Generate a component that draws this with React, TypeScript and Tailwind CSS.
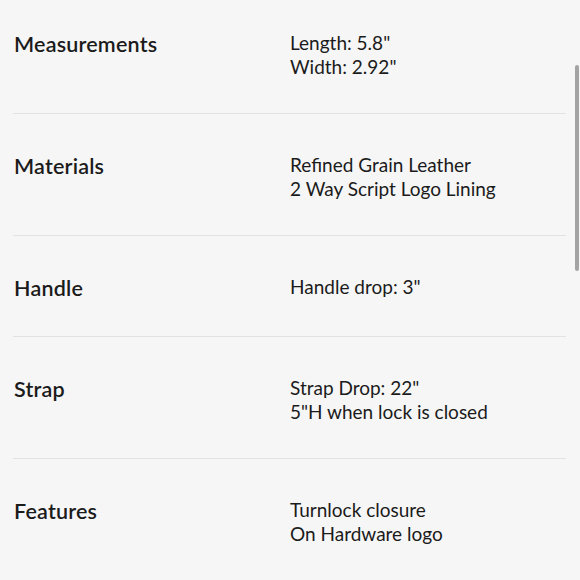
const specs = [
  { label: "Measurements", lines: ['Length: 5.8"', 'Width: 2.92"'] },
  { label: "Materials", lines: ["Refined Grain Leather", "2 Way Script Logo Lining"] },
  { label: "Handle", lines: ['Handle drop: 3"'] },
  { label: "Strap", lines: ['Strap Drop: 22"', '5"H when lock is closed'] },
  { label: "Features", lines: ["Turnlock closure", "On Hardware logo"] },
];

export default function App() {
  return (
    <div className="relative w-[580px] h-[580px] overflow-hidden bg-[#f6f6f6] text-[#1b1b1b] font-['Lato',sans-serif]">
      <div className="pl-[13px] pr-[14px]">
        {specs.map((s, i) => (
          <div
            key={s.label}
            className={`grid grid-cols-[277px_1fr] items-start pb-[34px] ${
              i === 0 ? "pt-[30px]" : "pt-[38px] border-t border-[#e2e2e2]"
            }`}
          >
            <h3 className="pl-[1px] text-[21.5px] leading-[28px] font-semibold tracking-[0.2px]">{s.label}</h3>
            <div className="mt-[1px] text-[19px] leading-[24px]">
              {s.lines.map((l) => (
                <p key={l}>{l}</p>
              ))}
            </div>
          </div>
        ))}
      </div>
      {/* scrollbar thumb */}
      <div className="absolute right-[1px] top-[65px] w-[4px] h-[206px] rounded-full bg-[#a3a3a3]" />
    </div>
  );
}
